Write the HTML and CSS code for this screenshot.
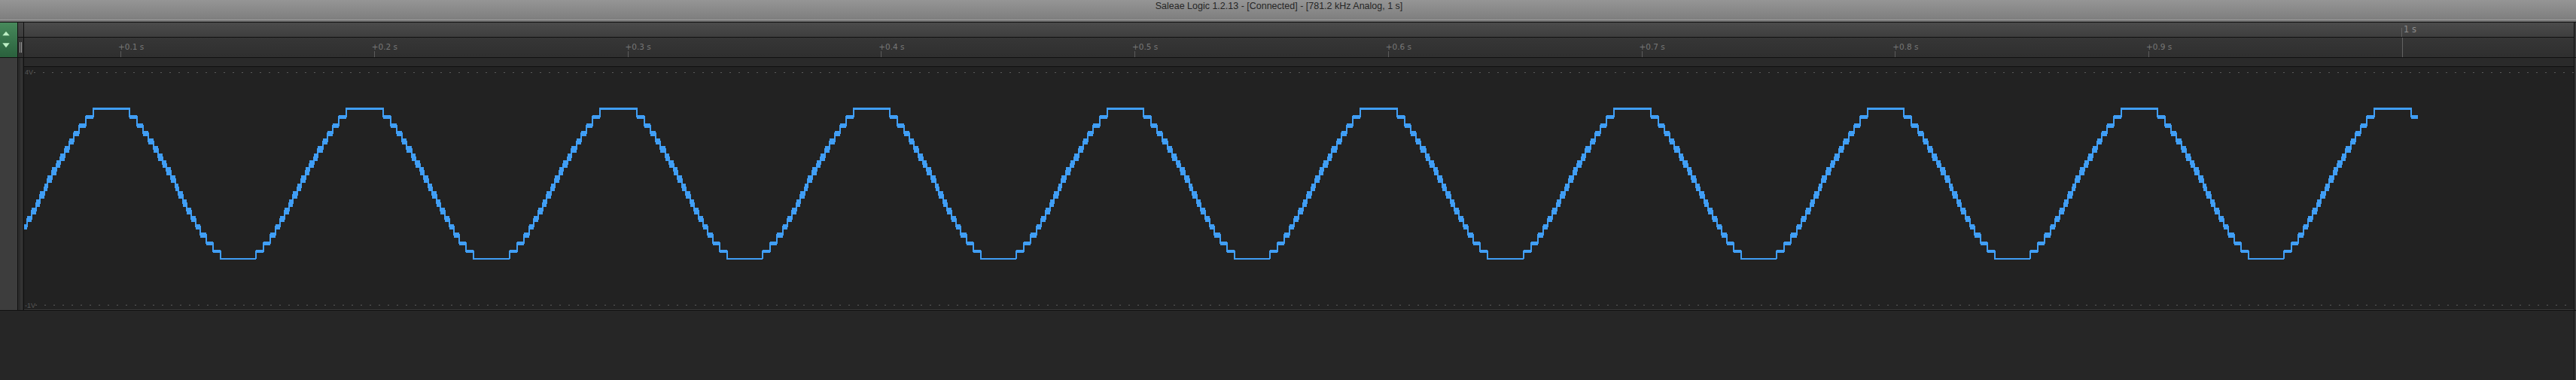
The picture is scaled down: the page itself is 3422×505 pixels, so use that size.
FILE: index.html
```html
<!DOCTYPE html>
<html lang="en">
<head>
<meta charset="utf-8">
<title>Saleae Logic 1.2.13</title>
<link rel="stylesheet" href="styles.css">
</head>
<body>
<div class="window">
  <header class="titlebar"><span class="title">Saleae Logic 1.2.13 - [Connected] - [781.2 kHz Analog, 1 s]</span></header>
  <div class="titlebar-edge"></div>

  <div class="header-row">
    <div class="nav">
      <svg class="nav-arrows" width="23" height="46" viewBox="0 0 23 46">
        <path d="M8 11.7 L12.7 17.3 L3.3 17.3 Z"/>
        <path d="M3.3 27.3 L12.7 27.3 L8 33.3 Z"/>
      </svg>
    </div>
    <div class="vrule"></div>
    <div class="gutter-head">
      <div class="gutter-top"></div>
      <div class="gutter-grip"><span class="grip"></span></div>
    </div>
    <div class="vrule"></div>
    <div class="ruler">
      <div class="ruler-major">
        <span class="major-mark"></span><span class="major-label">1 s</span>
      </div>
      <div class="ruler-minor">
        <div class="tick"><span class="tick-label">+0.1 s</span><span class="tick-mark"></span></div>
        <div class="tick"><span class="tick-label">+0.2 s</span><span class="tick-mark"></span></div>
        <div class="tick"><span class="tick-label">+0.3 s</span><span class="tick-mark"></span></div>
        <div class="tick"><span class="tick-label">+0.4 s</span><span class="tick-mark"></span></div>
        <div class="tick"><span class="tick-label">+0.5 s</span><span class="tick-mark"></span></div>
        <div class="tick"><span class="tick-label">+0.6 s</span><span class="tick-mark"></span></div>
        <div class="tick"><span class="tick-label">+0.7 s</span><span class="tick-mark"></span></div>
        <div class="tick"><span class="tick-label">+0.8 s</span><span class="tick-mark"></span></div>
        <div class="tick"><span class="tick-label">+0.9 s</span><span class="tick-mark"></span></div>
        <div class="tick tick-end"><span class="tick-mark"></span></div>
      </div>
    </div>
    <div class="vrule"></div>
    <div class="edge"></div>
  </div>

  <div class="channel-row">
    <div class="channel-side"></div>
    <div class="vrule"></div>
    <div class="gutter"></div>
    <div class="vrule"></div>
    <div class="channel">
      <div class="channel-strip"></div>
      <div class="plot">
        <svg class="wave" width="3387" height="322" viewBox="32 89 3387 322">
          <defs>
            <clipPath id="plotclip"><rect x="32" y="89" width="3180" height="322"/></clipPath>
            <g id="period">
              <path class="wave-line" d="M0,344 V333.5 H10 V323 H19 V312 H26.7 V301 H32.7 V290.5 H38.7 V280 H44.5 V269.5 H49.5 V258.5 H55.5 V248.5 H60 V237.5 H66 V227 H71.5 V217.5 H77 V208.5 H82.5 V198 H89 V187.5 H95.3 V177 H102.3 V166.5 H110.7 V155 H120.7 V144.25 H169 V155 H179 V166.5 H187.4 V177 H194.4 V187.5 H200.7 V198 H207.2 V208.5 H212.7 V217.5 H218.2 V227 H223.7 V237.5 H229.7 V248.5 H234.2 V258.5 H240.2 V269.5 H245.2 V280 H251 V290.5 H257 V301 H263 V312 H270.7 V323 H279.7 V333.5 H289.7 V343.75 H336.75"/>
              <rect x="0" y="331.5" width="10" height="4"/>
              <rect x="10" y="320.5" width="9" height="5"/>
              <rect x="19" y="308.5" width="7.7" height="7"/>
              <rect x="26.7" y="297.5" width="6" height="7"/>
              <rect x="32.7" y="286.5" width="6" height="8"/>
              <rect x="38.7" y="275.5" width="5.8" height="9"/>
              <rect x="44.5" y="264.5" width="5" height="10"/>
              <rect x="49.5" y="253.5" width="6" height="10"/>
              <rect x="55.5" y="243.5" width="4.5" height="10"/>
              <rect x="60" y="232.5" width="6" height="10"/>
              <rect x="66" y="221.5" width="5.5" height="11"/>
              <rect x="71.5" y="212.5" width="5.5" height="10"/>
              <rect x="77" y="203.5" width="5.5" height="10"/>
              <rect x="82.5" y="193.5" width="6.5" height="9"/>
              <rect x="89" y="183.5" width="6.3" height="8"/>
              <rect x="95.3" y="173.5" width="7" height="7"/>
              <rect x="102.3" y="163.5" width="8.4" height="6"/>
              <rect x="110.7" y="152.5" width="10" height="5"/>
              <rect x="120.7" y="143" width="48.3" height="3"/>
              <rect x="169" y="152.5" width="10" height="5"/>
              <rect x="179" y="163.5" width="8.4" height="6"/>
              <rect x="187.4" y="173.5" width="7" height="7"/>
              <rect x="194.4" y="183.5" width="6.3" height="8"/>
              <rect x="200.7" y="193.5" width="6.5" height="9"/>
              <rect x="207.2" y="203.5" width="5.5" height="10"/>
              <rect x="212.7" y="212.5" width="5.5" height="10"/>
              <rect x="218.2" y="221.5" width="5.5" height="11"/>
              <rect x="223.7" y="232.5" width="6" height="10"/>
              <rect x="229.7" y="243.5" width="4.5" height="10"/>
              <rect x="234.2" y="253.5" width="6" height="10"/>
              <rect x="240.2" y="264.5" width="5" height="10"/>
              <rect x="245.2" y="275.5" width="5.8" height="9"/>
              <rect x="251" y="286.5" width="6" height="8"/>
              <rect x="257" y="297.5" width="6" height="7"/>
              <rect x="263" y="308.5" width="7.7" height="7"/>
              <rect x="270.7" y="320.5" width="9" height="5"/>
              <rect x="279.7" y="331.5" width="10" height="4"/>
              <rect x="289.7" y="342.5" width="47.05" height="2.5"/>
            </g>
          </defs>
          <line class="level-line" x1="45" y1="96.5" x2="3419" y2="96.5"/>
          <line class="level-line" x1="47" y1="405.5" x2="3419" y2="405.5"/>
          <g class="wave-trace" clip-path="url(#plotclip)">
            <use href="#period" x="3"/>
            <use href="#period" x="339.75"/>
            <use href="#period" x="676.5"/>
            <use href="#period" x="1013.25"/>
            <use href="#period" x="1350"/>
            <use href="#period" x="1686.75"/>
            <use href="#period" x="2023.5"/>
            <use href="#period" x="2360.25"/>
            <use href="#period" x="2697"/>
            <use href="#period" x="3033.75"/>
          </g>
        </svg>
        <span class="axis-label axis-top">4V</span>
        <span class="axis-label axis-bottom">-1V</span>
      </div>
    </div>
    <div class="vrule"></div>
    <div class="edge"></div>
  </div>

  <div class="footer-row">
    <div class="footer-fill"></div>
    <div class="vrule"></div>
    <div class="edge"></div>
  </div>
</div>
</body>
</html>
```

FILE: styles.css
```css
html, body {
  margin: 0;
  padding: 0;
  background: #262626;
}

.window {
  display: flex;
  flex-direction: column;
  width: 3422px;
  height: 100vh;
  overflow: hidden;
}

/* ---------- title bar ---------- */
.titlebar {
  height: 26px;
  flex: none;
  padding-right: 24px;
  text-align: center;
  background: linear-gradient(#959595, #7e7e7e);
  font-family: "Liberation Sans", Arial, sans-serif;
  font-size: 12.5px;
  line-height: 17px;
  color: #262626;
}

.titlebar-edge {
  height: 2px;
  flex: none;
  border-top: 1px solid #a0a0a0;
  border-bottom: 1px solid #141414;
  background: #6b6b6b;
}

/* ---------- shared pieces ---------- */
.vrule {
  width: 1px;
  flex: none;
  background: #111111;
}

.edge {
  width: 2px;
  flex: none;
  background: #3a3a3a;
}

/* ---------- header (ruler) row ---------- */
.header-row {
  display: flex;
  height: 46px;
  flex: none;
  border-bottom: 1px solid #111111;
}

.nav {
  width: 23px;
  flex: none;
  background: linear-gradient(#47895b, #2a613d);
}

.nav-arrows {
  display: block;
  fill: #bdefc4;
}

.gutter-head {
  width: 7px;
  flex: none;
  display: flex;
  flex-direction: column;
}

.gutter-top {
  height: 19px;
  border-bottom: 1px solid #111111;
  background: linear-gradient(#474747, #3c3c3c);
}

.gutter-grip {
  flex: 1;
  background: linear-gradient(#353535, #2e2e2e);
}

.grip {
  display: block;
  box-sizing: border-box;
  width: 3px;
  height: 14px;
  margin: 6px 0 0 2px;
  border-left: 1px solid #9c9c9c;
  border-right: 1px solid #9c9c9c;
  background: #262626;
}

.ruler {
  flex: 1;
  display: flex;
  flex-direction: column;
  min-width: 0;
}

.ruler-major {
  height: 19px;
  flex: none;
  display: flex;
  align-items: flex-start;
  padding-left: 3158px;
  border-bottom: 1px solid #111111;
  background: linear-gradient(#4b4b4b, #3e3e3e);
}

.major-mark {
  width: 1px;
  height: 12px;
  margin-top: 7px;
  background: #626262;
}

.major-label {
  margin-left: 2px;
  padding-top: 3px;
  font-family: "DejaVu Sans", sans-serif;
  font-size: 11.5px;
  line-height: 13px;
  color: #8c8c8c;
}

.ruler-minor {
  flex: 1;
  display: flex;
  padding-left: 125px;
  background: linear-gradient(#363636, #2f2f2f);
}

.tick {
  flex: 0 0 336.75px;
  display: flex;
  flex-direction: column;
}

.tick-label {
  box-sizing: border-box;
  height: 18px;
  padding-top: 5.5px;
  font-family: "DejaVu Sans", sans-serif;
  font-size: 10.5px;
  line-height: 12px;
  color: #777777;
  white-space: nowrap;
}

.tick-mark {
  width: 1px;
  height: 8px;
  margin-left: 3px;
  background: #5c5c5c;
}

.tick-end .tick-mark {
  height: 26px;
  background: #626262;
}

/* ---------- channel row ---------- */
.channel-row {
  display: flex;
  height: 335px;
  flex: none;
  border-bottom: 1px solid #111111;
}

.channel-side {
  width: 23px;
  flex: none;
  background: #3d3d3d;
}

.gutter {
  width: 7px;
  flex: none;
  background: linear-gradient(90deg, #2b2b2b 0 3px, #333333 3px 6px, #262626 6px);
}

.channel {
  flex: 1;
  display: flex;
  flex-direction: column;
  min-width: 0;
}

.channel-strip {
  height: 11px;
  flex: none;
  border-bottom: 1px solid #111111;
  background: #2a2a2a;
}

.plot {
  position: relative;
  height: 322px;
  flex: none;
  border-bottom: 1px solid #383838;
  background: #222222;
}

.wave {
  display: block;
}

.level-line {
  stroke: #5a5a5a;
  stroke-width: 1;
  stroke-dasharray: 2 10;
  shape-rendering: crispEdges;
}

.wave-trace {
  fill: #409ef5;
  shape-rendering: crispEdges;
}

.wave-line {
  fill: none;
  stroke: #409ef5;
  stroke-width: 2;
}

.axis-label {
  position: absolute;
  left: 1px;
  font-family: "Liberation Sans", Arial, sans-serif;
  font-size: 9px;
  line-height: 10px;
  color: #585858;
}

.axis-top {
  top: 2px;
}

.axis-bottom {
  top: 312px;
}

/* ---------- empty lower area ---------- */
.footer-row {
  flex: 1;
  display: flex;
}

.footer-fill {
  flex: 1;
  background: #262626;
}
```
